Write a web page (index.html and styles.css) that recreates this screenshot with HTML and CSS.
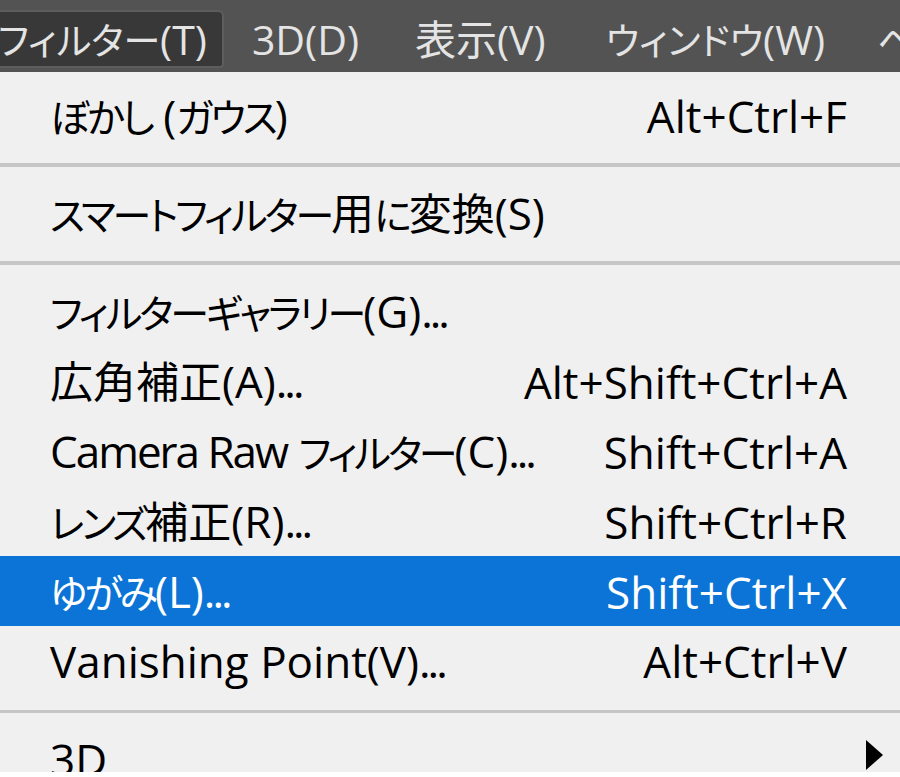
FILE: index.html
```html
<!DOCTYPE html>
<html lang="ja">
<head>
<meta charset="utf-8">
<title>フィルターメニュー</title>
<link rel="stylesheet" href="styles.css">
</head>
<body>
<div class="screen">
  <div class="menubar">
    <div class="mb-item active"><span class="bk">フィルター</span>(T)</div>
    <div class="mb-item m3d">3D(D)</div>
    <div class="mb-item mview">表示(V)</div>
    <div class="mb-item mwin"><span class="bk">ウィンドウ</span>(W)</div>
    <div class="mb-item mhelp"><span class="bk">ヘルプ</span>(H)</div>
  </div>
  <div class="menu">
    <div class="row"><span class="label"><span class="k">ぼかし</span> (<span class="k">ガウス</span>)</span><span class="key">Alt+Ctrl+F</span><span class="sub"></span></div>
    <div class="sep"></div>
    <div class="row"><span class="label"><span class="k">スマートフィルター</span><span class="j">用</span><span class="k">に</span><span class="j">変換</span>(S)</span><span class="key"></span><span class="sub"></span></div>
    <div class="sep"></div>
    <div class="row"><span class="label"><span class="k">フィルターギャラリー</span>(G)<span class="d">...</span></span><span class="key"></span><span class="sub"></span></div>
    <div class="row"><span class="label"><span class="j">広角補正</span>(A)<span class="d">...</span></span><span class="key">Alt+Shift+Ctrl+A</span><span class="sub"></span></div>
    <div class="row"><span class="label"><span class="cr">Camera Raw</span> <span class="k">フィルター</span>(C)<span class="d">...</span></span><span class="key">Shift+Ctrl+A</span><span class="sub"></span></div>
    <div class="row"><span class="label"><span class="k">レンズ</span><span class="j">補正</span>(R)<span class="d">...</span></span><span class="key">Shift+Ctrl+R</span><span class="sub"></span></div>
    <div class="row selected"><span class="label"><span class="k">ゆがみ</span>(L)<span class="d">...</span></span><span class="key">Shift+Ctrl+X</span><span class="sub"></span></div>
    <div class="row"><span class="label">Vanishing Point(V)<span class="d">...</span></span><span class="key">Alt+Ctrl+V</span><span class="sub"></span></div>
    <div class="sep thin"></div>
    <div class="row"><span class="label">3D</span><span class="key"></span><span class="sub"><svg class="arrow" width="17" height="30" viewBox="0 0 17 30"><polygon points="0,0 17,15 0,30" fill="#000"/></svg></span></div>
  </div>
</div>
</body>
</html>
```
FILE: styles.css
```css
html, body {
  margin: 0;
  padding: 0;
  background: #ffffff;
}
body {
  width: 900px;
  height: 777px;
  overflow: hidden;
  font-family: "Open Sans", "Noto Sans CJK JP", sans-serif;
  font-feature-settings: "palt";
}
.screen {
  width: 900px;
  height: 772px;
  overflow: hidden;
  background: #f0f0f0;
}
.menubar {
  height: 72px;
  box-sizing: border-box;
  padding-top: 10px;
  background: #535353;
  display: flex;
  align-items: flex-start;
  white-space: nowrap;
  overflow: hidden;
}
.mb-item {
  height: 58px;
  line-height: 58px;
  font-size: 41px;
  color: #e4e4e4;
  padding: 0;
  flex: none;
}
.bk {
  font-size: 37px;
}
.mb-item.active {
  background: #383838;
  margin-left: -6px;
  padding: 0 15px 0 4px;
  border: 2px solid #5d5d5d;
  border-left: none;
  border-radius: 0 6px 4px 0;
  box-sizing: border-box;
  line-height: 54px;
}
.m3d {
  margin-left: 28px;
  margin-right: 56px;
}
.mview {
  margin-right: 60px;
}
.mwin {
  margin-right: 52px;
}
.menu {
  padding-top: 8px;
}
.row {
  height: 70px;
  display: grid;
  grid-template-columns: 1fr auto 36px;
  align-items: center;
  padding: 0 17px 0 50px;
  font-size: 44px;
  line-height: 70px;
  color: #000;
  white-space: nowrap;
}
.k {
  font-size: 39px;
  letter-spacing: -3px;
}
.j {
  font-size: 43px;
}
.cr {
  letter-spacing: -2px;
}
.d {
  letter-spacing: -3px;
}
.row.selected {
  background: #0b74d6;
  color: #ffffff;
}
.key {
  text-align: right;
}
.sub {
  display: flex;
  justify-content: flex-end;
  align-items: center;
}
.arrow {
  display: block;
  margin-bottom: 8px;
}
.sep {
  height: 28px;
  box-sizing: border-box;
  padding-top: 13px;
}
.sep::before {
  content: "";
  display: block;
  height: 4px;
  background: #c6c6c6;
}
.sep.thin::before {
  height: 3px;
  margin-top: 1px;
}
```
